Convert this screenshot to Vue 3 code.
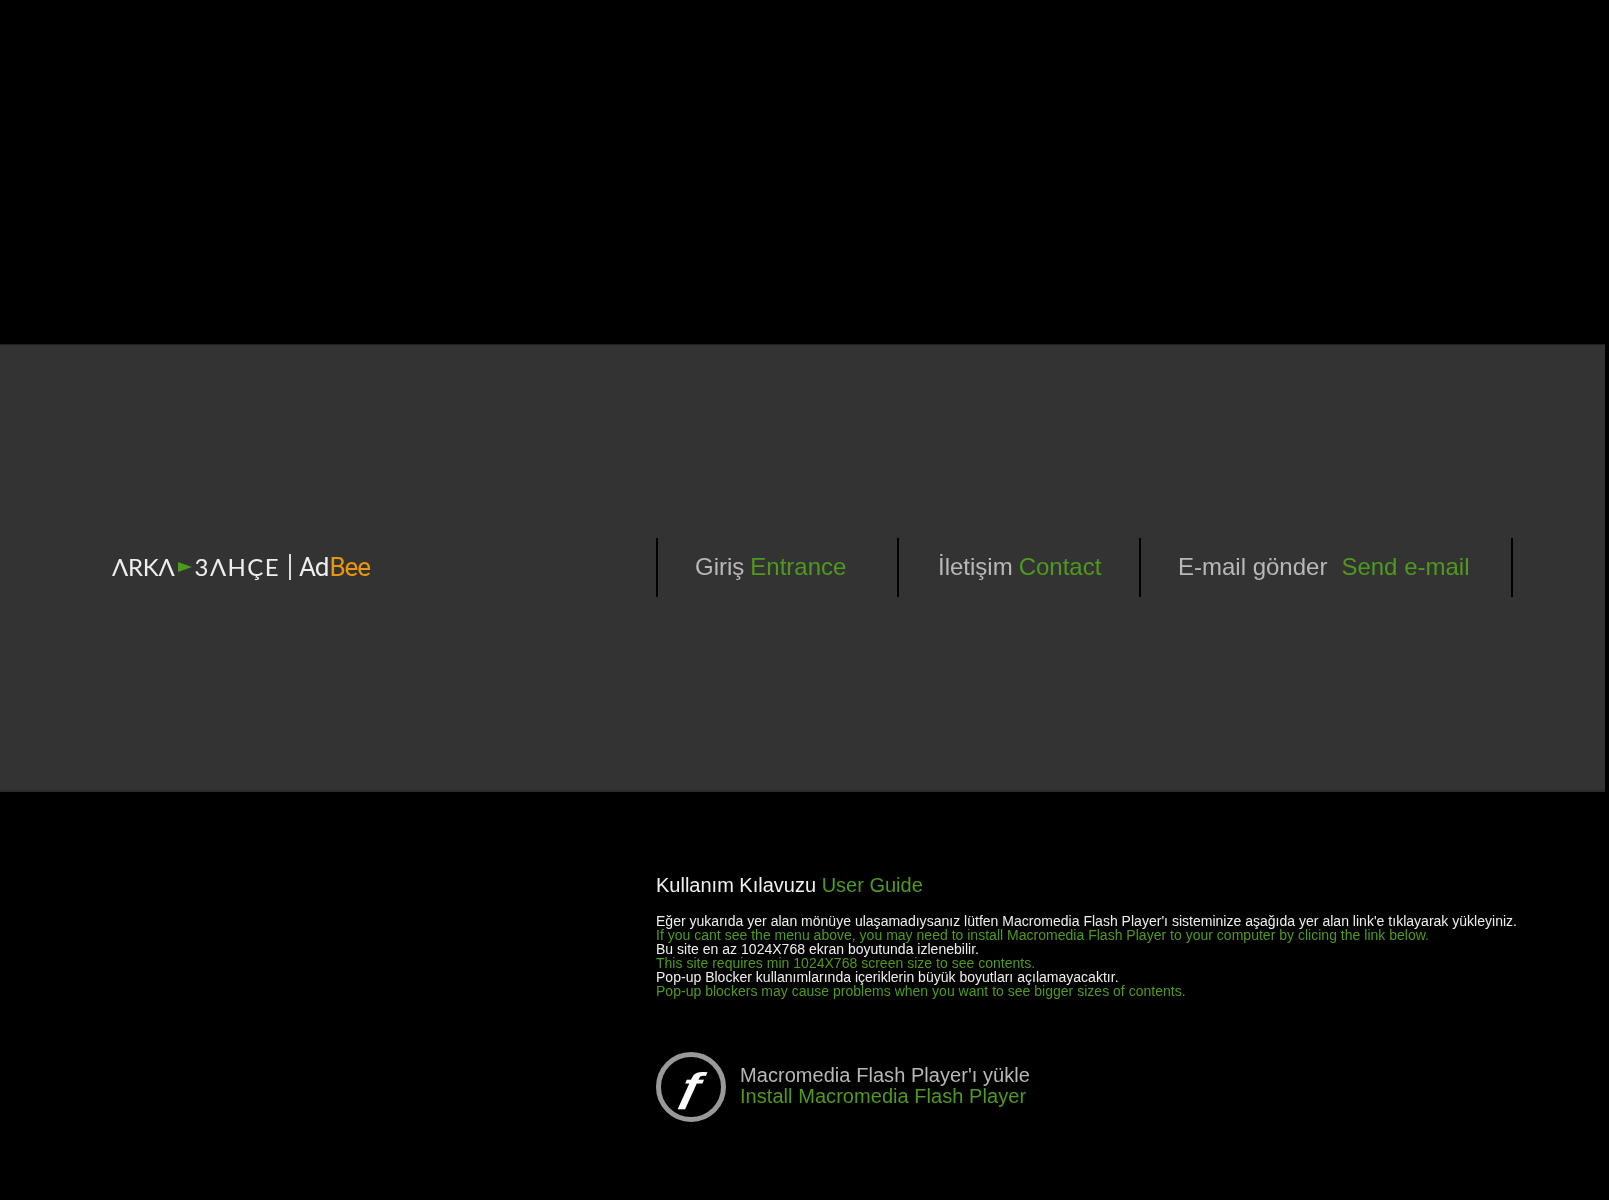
<script setup>
const navItems = [
  { tr: 'Giriş', en: 'Entrance', cls: 'nav-a' },
  { tr: 'İletişim', en: 'Contact', cls: 'nav-b' },
  { tr: 'E-mail gönder', en: 'Send e-mail', cls: 'nav-c' }
]
const notes = [
  { text: "Eğer yukarıda yer alan mönüye ulaşamadıysanız lütfen Macromedia Flash Player'ı sisteminize aşağıda yer alan link'e tıklayarak yükleyiniz.", green: false },
  { text: "If you cant see the menu above, you may need to install Macromedia Flash Player to your computer by clicing the link below.", green: true },
  { text: 'Bu site en az 1024X768 ekran boyutunda izlenebilir.', green: false },
  { text: 'This site requires min 1024X768 screen size to see contents.', green: true },
  { text: 'Pop-up Blocker kullanımlarında içeriklerin büyük boyutları açılamayacaktır.', green: false },
  { text: 'Pop-up blockers may cause problems when you want to see bigger sizes of contents.', green: true }
]
</script>

<template>
  <div class="page">
    <header class="band">
      <div class="logo">
        <span class="logo-word">ΛRKΛ</span>
        <svg class="logo-arrow" width="14" height="10" viewBox="0 0 14 10"><path d="M0 0L14 5L0 10Z" fill="#4f9a1e" /></svg>
        <span class="logo-word wide">3ΛHÇE</span>
        <span class="logo-bar"></span>
        <span class="logo-ad">Ad<span class="bee">Bee</span></span>
      </div>
      <nav class="nav">
        <a v-for="item in navItems" :key="item.tr" class="nav-item" :class="item.cls">
          <span class="tr">{{ item.tr }}</span>
          <span class="green">{{ item.en }}</span>
        </a>
      </nav>
    </header>

    <section class="guide">
      <h2 class="guide-title">Kullanım Kılavuzu <span class="green">User Guide</span></h2>
      <div class="notes">
        <p v-for="n in notes" :key="n.text" class="note" :class="{ green: n.green }">{{ n.text }}</p>
      </div>
      <a class="install">
        <span class="flash-logo"><span class="flash-f">ƒ</span></span>
        <span class="install-text">
          <span class="install-tr">Macromedia Flash Player'ı yükle</span>
          <span class="green">Install Macromedia Flash Player</span>
        </span>
      </a>
    </section>
  </div>
</template>

<style scoped>
.page {
  min-height: 1200px;
  background: #000;
  font-family: "Liberation Sans", Arial, sans-serif;
  padding-top: 344px;
  box-sizing: border-box;
  overflow: hidden;
}
.green { color: #4f9a1e; }
.band {
  width: 1605px;
  height: 448px;
  background: #333;
  border-top: 1px solid #1f1f1f;
  border-bottom: 2px solid #2a2a2a;
  display: flex;
  align-items: center;
  box-sizing: border-box;
  padding-left: 112px;
  padding-bottom: 1px;
}
.logo {
  display: flex;
  align-items: center;
  width: 544px;
  height: 60px;
  color: #eee;
  filter: blur(0.5px);
}
.logo-word {
  font-family: "Lato", sans-serif;
  font-weight: 400;
  font-size: 24px;
  line-height: 1;
  letter-spacing: -0.2px;
}
.logo-word.wide { letter-spacing: 1.4px; }
.logo-arrow { margin: 0 3px 0 3px; }
.logo-bar {
  width: 2px;
  height: 26px;
  background: #ddd;
  margin: 0 8px 0 9px;
}
.logo-ad {
  font-family: "Roboto", sans-serif;
  font-weight: 400;
  font-size: 26px;
  line-height: 1;
  letter-spacing: -1.1px;
}
.bee { color: #e8960c; margin-left: 1px; }
.nav {
  display: flex;
  height: 59px;
  border-left: 2px solid #000;
  filter: blur(0.4px);
}
.nav-item {
  display: flex;
  align-items: center;
  gap: 6px;
  box-sizing: border-box;
  border-right: 2px solid #000;
  font-size: 24px;
  white-space: nowrap;
}
.tr { color: #b8b8b8; }
.nav-a { width: 241px; padding-left: 37px; }
.nav-b { width: 242px; padding-left: 39px; }
.nav-c { width: 372px; padding-left: 37px; gap: 14px; }
.guide {
  padding: 81px 0 0 656px;
  filter: blur(0.6px);
}
.guide-title {
  margin: 0;
  font-size: 20px;
  line-height: 24px;
  font-weight: 400;
  color: #f0f0f0;
}
.notes { margin-top: 17px; }
.note {
  margin: 0;
  font-size: 14px;
  line-height: 14px;
  letter-spacing: 0.015px;
  white-space: nowrap;
  color: #eee;
}
.note.green { color: #4f9a1e; }
.install {
  display: flex;
  align-items: center;
  gap: 14px;
  margin-top: 54px;
}
.flash-logo {
  width: 70px;
  height: 70px;
  box-sizing: border-box;
  border: 5px solid #999;
  border-radius: 50%;
  display: flex;
  align-items: center;
  justify-content: center;
}
.flash-f {
  font-family: "Liberation Sans", sans-serif;
  font-style: italic;
  font-weight: 700;
  font-size: 40px;
  line-height: 1;
  color: #fff;
  transform: scaleX(1.35) skewX(-8deg);
}
.install-text {
  display: flex;
  flex-direction: column;
  font-size: 20px;
  line-height: 21px;
  letter-spacing: 0.05px;
  margin-bottom: 3px;
}
.install-tr { color: #b8b8b8; }
</style>
